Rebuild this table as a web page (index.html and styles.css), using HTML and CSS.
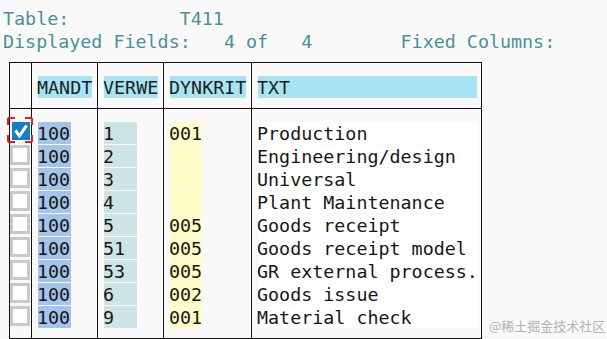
FILE: index.html
```html
<!DOCTYPE html>
<html>
<head>
<meta charset="utf-8">
<link rel="stylesheet" href="styles.css">
</head>
<body>
<div class="info">
  <div class="line">Table:          T411</div>
  <div class="line">Displayed Fields:   4 of   4        Fixed Columns:</div>
</div>
<div class="grid">
  <div class="hcell sel"></div>
  <div class="hcell"><span class="hlabel">MANDT</span></div>
  <div class="hcell"><span class="hlabel">VERWE</span></div>
  <div class="hcell"><span class="hlabel">DYNKRIT</span></div>
  <div class="hcell"><span class="hlabel wide">TXT</span></div>

  <div class="bcell sel">
    <div class="cbrow"><span class="cb checked">
      <svg class="focus" width="26" height="26" viewBox="0 0 26 26"><rect x="1" y="1" width="24" height="24" fill="none" stroke="#e0201c" stroke-width="2" stroke-dasharray="7 10 7 0"/></svg>
      <svg class="tick" width="18" height="18" viewBox="0 0 18 18"><polyline points="3.5,8.5 7.5,14 14.5,3.5" fill="none" stroke="#fff" stroke-width="3"/></svg>
    </span></div>
    <div class="cbrow"><span class="cb"></span></div>
    <div class="cbrow"><span class="cb"></span></div>
    <div class="cbrow"><span class="cb"></span></div>
    <div class="cbrow"><span class="cb"></span></div>
    <div class="cbrow"><span class="cb"></span></div>
    <div class="cbrow"><span class="cb"></span></div>
    <div class="cbrow"><span class="cb"></span></div>
    <div class="cbrow"><span class="cb"></span></div>
  </div>
  <div class="bcell">
    <div class="v mandt">100</div><div class="v mandt">100</div><div class="v mandt">100</div>
    <div class="v mandt">100</div><div class="v mandt">100</div><div class="v mandt">100</div>
    <div class="v mandt">100</div><div class="v mandt">100</div><div class="v mandt">100</div>
  </div>
  <div class="bcell">
    <div class="v verwe">1</div><div class="v verwe">2</div><div class="v verwe">3</div>
    <div class="v verwe">4</div><div class="v verwe">5</div><div class="v verwe">51</div>
    <div class="v verwe">53</div><div class="v verwe">6</div><div class="v verwe">9</div>
  </div>
  <div class="bcell">
    <div class="v dyn">001</div><div class="v dyn"></div><div class="v dyn"></div>
    <div class="v dyn"></div><div class="v dyn">005</div><div class="v dyn">005</div>
    <div class="v dyn">005</div><div class="v dyn">002</div><div class="v dyn">001</div>
  </div>
  <div class="bcell">
    <div class="v txt">Production</div>
    <div class="v txt">Engineering/design</div>
    <div class="v txt">Universal</div>
    <div class="v txt">Plant Maintenance</div>
    <div class="v txt">Goods receipt</div>
    <div class="v txt">Goods receipt model</div>
    <div class="v txt">GR external process.</div>
    <div class="v txt">Goods issue</div>
    <div class="v txt">Material check</div>
  </div>
</div>
<div class="watermark">@稀土掘金技术社区</div>
</body>
</html>
```
FILE: styles.css
```css
* { box-sizing: border-box; }
html, body {
  margin: 0;
  padding: 0;
  background: #f9f9f9;
  width: 607px;
  height: 339px;
  overflow: hidden;
}
body {
  font-family: "DejaVu Sans Mono", "Liberation Mono", monospace;
  font-size: 18.35px;
  position: relative;
}
.info {
  padding: 7px 0 0 3px;
  color: #4b8f9d;
}
.line {
  white-space: pre;
  height: 23px;
  line-height: 23px;
}
.grid {
  margin: 9px 0 0 9px;
  display: grid;
  grid-template-columns: 22px 66px 66px 88px 230px;
  grid-template-rows: 46px 230px;
  border-left: 1px solid #111;
  border-top: 1px solid #111;
  width: 473px;
}
.hcell, .bcell {
  border-right: 1px solid #111;
  border-bottom: 1px solid #111;
}
.hcell {
  padding: 13px 4px 0 6px;
}
.hcell.sel, .bcell.sel { padding-left: 0; padding-right: 0; }
.hlabel {
  display: inline-block;
  height: 22px;
  line-height: 23px;
  background: #a8e4f3;
  color: #1b1f22;
  white-space: pre;
  text-indent: -1px;
}
.hlabel.wide { display: block; }
.bcell {
  padding: 13px 4px 0 6px;
  display: flex;
  flex-direction: column;
  gap: 1px;
}
.v {
  height: 22px;
  line-height: 24px;
  color: #161616;
  white-space: pre;
  text-indent: -1px;
}
.mandt { width: 33px; background: #a4c4eb; }
.verwe { width: 33px; background: #cde4e4; }
.dyn { width: 32px; background: #fffcc5; }
.txt { width: 220px; background: #ffffff; }
.cbrow {
  height: 22px;
}
.cb {
  display: block;
  position: relative;
  width: 20px;
  height: 20px;
  border: 3px solid #c9c9c9;
  background: #ffffff;
}
.cb.checked {
  border: 0;
  background: transparent;
}
.cb .tick {
  position: absolute;
  left: 2px;
  top: 0;
  background: #1a7dc3;
}
.cb .focus {
  position: absolute;
  left: -3px;
  top: -5px;
}
.watermark {
  position: absolute;
  left: 489px;
  top: 316px;
  font-family: "Noto Sans CJK SC", "Noto Sans", sans-serif;
  font-size: 13px;
  line-height: 20px;
  color: #b3b3b3;
}
```
